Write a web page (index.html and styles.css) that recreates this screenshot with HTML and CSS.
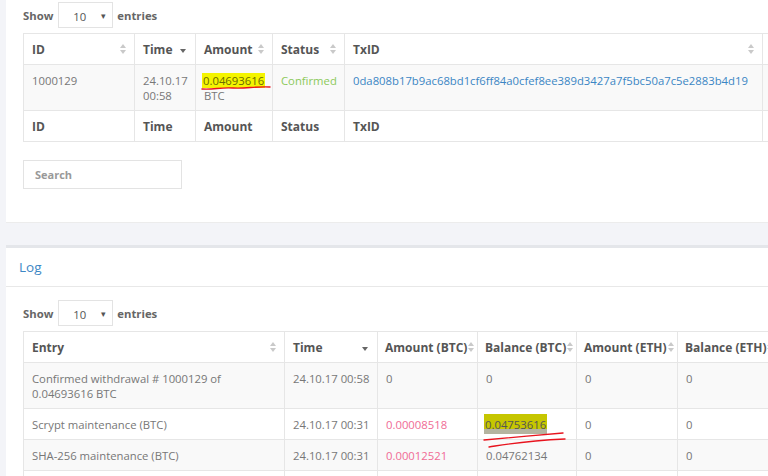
FILE: index.html
```html
<!DOCTYPE html>
<html>
<head>
<meta charset="utf-8">
<link rel="stylesheet" href="styles.css">
</head>
<body>
<div class="page">
  <section class="panel panel-top">
    <div class="length">
      <span class="lbl">Show</span>
      <span class="select"><span>10</span><span class="caret">&#9662;</span></span>
      <span class="lbl">entries</span>
    </div>
    <table class="dt t1">
      <colgroup><col style="width:111px"><col style="width:61px"><col style="width:77px"><col style="width:72px"><col style="width:418px"><col style="width:120px"></colgroup>
      <thead>
        <tr>
          <th><div class="hc"><span>ID</span><svg class="si" viewBox="0 0 6 10"><path d="M0 4L3 0L6 4Z M0 6L6 6L3 10Z"/></svg></div></th>
          <th><div class="hc"><span>Time</span><svg class="sd" viewBox="0 0 6 4"><path d="M0 0L6 0L3 4Z"/></svg></div></th>
          <th><div class="hc"><span>Amount</span><svg class="si" viewBox="0 0 6 10"><path d="M0 4L3 0L6 4Z M0 6L6 6L3 10Z"/></svg></div></th>
          <th><div class="hc"><span>Status</span><svg class="si" viewBox="0 0 6 10"><path d="M0 4L3 0L6 4Z M0 6L6 6L3 10Z"/></svg></div></th>
          <th><div class="hc"><span>TxID</span><svg class="si" viewBox="0 0 6 10"><path d="M0 4L3 0L6 4Z M0 6L6 6L3 10Z"/></svg></div></th>
          <th></th>
        </tr>
      </thead>
      <tbody>
        <tr class="odd">
          <td>1000129</td>
          <td>24.10.17<br>00:58</td>
          <td><span class="mark-wrap"><mark class="hl">0.04693616</mark><svg class="scribble s1" viewBox="0 0 70 6"><path d="M1 4 C 12 5, 20 2, 32 3 S 55 1, 69 2"/></svg></span><br>BTC</td>
          <td class="ok">Confirmed</td>
          <td class="link">0da808b17b9ac68bd1cf6ff84a0cfef8ee389d3427a7f5bc50a7c5e2883b4d19</td>
          <td></td>
        </tr>
      </tbody>
      <tfoot>
        <tr><th>ID</th><th>Time</th><th>Amount</th><th>Status</th><th>TxID</th><th></th></tr>
      </tfoot>
    </table>
    <div class="search"><input type="text" placeholder="Search"></div>
  </section>

  <section class="panel panel-log">
    <h3 class="panel-title">Log</h3>
    <div class="panel-body">
      <div class="length">
        <span class="lbl">Show</span>
        <span class="select"><span>10</span><span class="caret">&#9662;</span></span>
        <span class="lbl">entries</span>
      </div>
      <table class="dt t2">
        <colgroup><col style="width:261px"><col style="width:93px"><col style="width:100px"><col style="width:99px"><col style="width:101px"><col style="width:100px"></colgroup>
        <thead>
          <tr>
            <th><div class="hc"><span>Entry</span><svg class="si" viewBox="0 0 6 10"><path d="M0 4L3 0L6 4Z M0 6L6 6L3 10Z"/></svg></div></th>
            <th><div class="hc"><span>Time</span><svg class="sd" viewBox="0 0 6 4"><path d="M0 0L6 0L3 4Z"/></svg></div></th>
            <th class="tight"><div class="hc"><span>Amount (BTC)</span><svg class="si" viewBox="0 0 6 10"><path d="M0 4L3 0L6 4Z M0 6L6 6L3 10Z"/></svg></div></th>
            <th class="tight"><div class="hc"><span>Balance (BTC)</span><svg class="si" viewBox="0 0 6 10"><path d="M0 4L3 0L6 4Z M0 6L6 6L3 10Z"/></svg></div></th>
            <th class="tight"><div class="hc"><span>Amount (ETH)</span><svg class="si" viewBox="0 0 6 10"><path d="M0 4L3 0L6 4Z M0 6L6 6L3 10Z"/></svg></div></th>
            <th class="tight"><div class="hc"><span>Balance (ETH)</span><svg class="si" viewBox="0 0 6 10"><path d="M0 4L3 0L6 4Z M0 6L6 6L3 10Z"/></svg></div></th>
          </tr>
        </thead>
        <tbody>
          <tr class="odd">
            <td>Confirmed withdrawal # 1000129 of<br>0.04693616 BTC</td>
            <td class="nw">24.10.17 00:58</td>
            <td>0</td>
            <td>0</td>
            <td class="plain">0</td>
            <td>0</td>
          </tr>
          <tr>
            <td>Scrypt maintenance (BTC)</td>
            <td class="nw">24.10.17 00:31</td>
            <td class="neg">0.00008518</td>
            <td><span class="mark-wrap"><mark class="hl2">0.04753616</mark><svg class="scribble s2" viewBox="0 0 84 18"><path d="M1 10 C 25 8, 55 5, 80 3"/><path d="M6 17 C 25 14, 40 11, 82 9"/></svg></span></td>
            <td class="plain">0</td>
            <td>0</td>
          </tr>
          <tr class="odd">
            <td>SHA-256 maintenance (BTC)</td>
            <td class="nw">24.10.17 00:31</td>
            <td class="neg">0.00012521</td>
            <td>0.04762134</td>
            <td class="plain">0</td>
            <td>0</td>
          </tr>
          <tr>
            <td>&nbsp;</td><td></td><td></td><td></td><td></td><td></td>
          </tr>
        </tbody>
      </table>
    </div>
  </section>
</div>
</body>
</html>
```

FILE: styles.css
```css
html, body {
  margin: 0;
  padding: 0;
  background: #f3f4f8;
  font-family: "Open Sans", "Liberation Sans", sans-serif;
  font-size: 11.3px;
  color: #777;
  overflow: hidden;
  height: 476px;
}

.page {
  margin-left: 6px;
  width: 762px;
  overflow: hidden;
}

.panel {
  background: #fff;
}

.panel-top {
  padding: 2px 0 33px 17px;
  border-bottom: 1px solid #ececec;
  margin-bottom: 22px;
}

.panel-log {
  border-top: 3px solid #e4e6ea;
  height: 240px;
}

.panel-title {
  margin: 0;
  height: 38px;
  line-height: 38px;
  padding-left: 13px;
  font-size: 13.5px;
  font-weight: 400;
  color: #3d87c5;
  border-bottom: 1px solid #e8e8e8;
}

.panel-body {
  padding: 13px 0 0 17px;
}

.length {
  display: flex;
  align-items: center;
  height: 26px;
  gap: 5px;
}

.lbl {
  font-weight: 700;
  color: #666;
}

.select {
  box-sizing: border-box;
  width: 55px;
  height: 26px;
  border: 1px solid #e3e3e3;
  display: flex;
  align-items: center;
  justify-content: space-between;
  padding: 3px 6px 0 14px;
  color: #555;
  margin-right: -1px;
}

.caret {
  font-size: 9px;
  color: #555;
  margin-top: -3px;
}

.dt {
  border-collapse: collapse;
  table-layout: fixed;
  width: 860px;
  margin-top: 5px;
}

.t2 {
  width: 754px;
}

.dt th,
.dt td {
  border: 1px solid #e6e6e6;
  padding: 7.5px 8px;
  line-height: 15px;
  text-align: left;
  vertical-align: top;
  white-space: nowrap;
}

.dt th {
  font-weight: 700;
  font-size: 12px;
  color: #555;
}

.dt thead th {
  padding-right: 8px;
}

.dt thead th.tight {
  padding-right: 4px;
  padding-left: 7px;
}

.dt td {
  white-space: normal;
  color: #777;
}

.dt td.link,
.dt td.nw {
  white-space: nowrap;
}

.hc {
  display: flex;
  align-items: center;
  justify-content: space-between;
  gap: 1px;
}

.hc span {
  flex-shrink: 0;
}

.si {
  width: 6px;
  height: 10px;
  fill: #c9c9c9;
  flex-shrink: 0;
}

.sd {
  width: 6px;
  height: 4px;
  fill: #666;
  flex-shrink: 0;
  margin-top: 3px;
  margin-right: 1px;
}

tr.odd td {
  background: #f9f9f9;
}

.dt td.ok {
  color: #8cc95a;
}

.dt td.link {
  color: #3b86c4;
}

.dt td.neg {
  color: #f06b95;
}

.dt td.plain {
  color: #777;
}

.mark-wrap {
  position: relative;
  display: inline-block;
}

.hl {
  background: #f4f400;
  color: #6b6b00;
  padding: 0 1px 0 1px;
  margin-left: -2px;
}

.hl2 {
  background: #c6c600;
  color: #555;
  padding: 3px 1px 2px 1px;
  margin-left: -2px;
  box-shadow: inset 0 -5px 0 #b4b4a0;
}

.scribble {
  position: absolute;
  fill: none;
  stroke: #e8141e;
  stroke-width: 1.4;
  stroke-linecap: round;
}

.s1 {
  left: -3px;
  top: 12px;
  width: 70px;
  height: 6px;
}

.s2 {
  left: -3px;
  top: 13px;
  width: 84px;
  height: 18px;
}

.search {
  margin-top: 18px;
}

.search input {
  box-sizing: border-box;
  display: block;
  width: 159px;
  height: 29px;
  border: 1px solid #e3e3e3;
  padding: 0 11px;
  font-family: "Open Sans", "Liberation Sans", sans-serif;
  font-size: 11px;
  font-weight: 700;
  outline: none;
}

.search input::placeholder {
  color: #999;
}
```
